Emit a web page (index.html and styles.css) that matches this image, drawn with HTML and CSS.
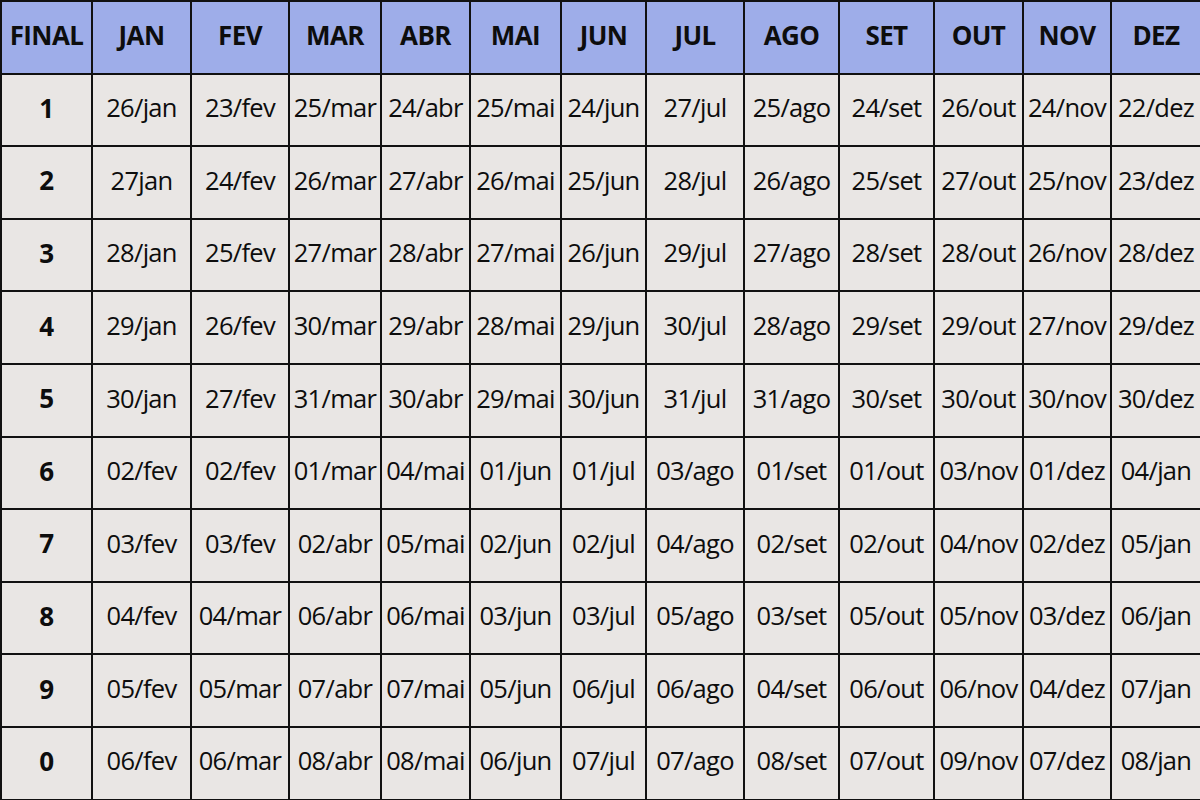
FILE: index.html
```html
<!DOCTYPE html>
<html lang="pt-BR">
<head>
<meta charset="utf-8">
<title>Calendário</title>
<link rel="stylesheet" href="styles.css">
</head>
<body>
<table class="cal">
<colgroup>
<col class="c91"><col class="c99"><col class="c98"><col class="c92"><col class="c89"><col class="c91"><col class="c85"><col class="c98"><col class="c95"><col class="c95"><col class="c89"><col class="c88"><col class="c90">
</colgroup>
<thead>
<tr><th>FINAL</th><th>JAN</th><th>FEV</th><th>MAR</th><th>ABR</th><th>MAI</th><th>JUN</th><th>JUL</th><th>AGO</th><th>SET</th><th>OUT</th><th>NOV</th><th>DEZ</th></tr>
</thead>
<tbody>
<tr><th>1</th><td>26/jan</td><td>23/fev</td><td>25/mar</td><td>24/abr</td><td>25/mai</td><td>24/jun</td><td>27/jul</td><td>25/ago</td><td>24/set</td><td>26/out</td><td>24/nov</td><td>22/dez</td></tr>
<tr><th>2</th><td>27jan</td><td>24/fev</td><td>26/mar</td><td>27/abr</td><td>26/mai</td><td>25/jun</td><td>28/jul</td><td>26/ago</td><td>25/set</td><td>27/out</td><td>25/nov</td><td>23/dez</td></tr>
<tr><th>3</th><td>28/jan</td><td>25/fev</td><td>27/mar</td><td>28/abr</td><td>27/mai</td><td>26/jun</td><td>29/jul</td><td>27/ago</td><td>28/set</td><td>28/out</td><td>26/nov</td><td>28/dez</td></tr>
<tr><th>4</th><td>29/jan</td><td>26/fev</td><td>30/mar</td><td>29/abr</td><td>28/mai</td><td>29/jun</td><td>30/jul</td><td>28/ago</td><td>29/set</td><td>29/out</td><td>27/nov</td><td>29/dez</td></tr>
<tr><th>5</th><td>30/jan</td><td>27/fev</td><td>31/mar</td><td>30/abr</td><td>29/mai</td><td>30/jun</td><td>31/jul</td><td>31/ago</td><td>30/set</td><td>30/out</td><td>30/nov</td><td>30/dez</td></tr>
<tr><th>6</th><td>02/fev</td><td>02/fev</td><td>01/mar</td><td>04/mai</td><td>01/jun</td><td>01/jul</td><td>03/ago</td><td>01/set</td><td>01/out</td><td>03/nov</td><td>01/dez</td><td>04/jan</td></tr>
<tr><th>7</th><td>03/fev</td><td>03/fev</td><td>02/abr</td><td>05/mai</td><td>02/jun</td><td>02/jul</td><td>04/ago</td><td>02/set</td><td>02/out</td><td>04/nov</td><td>02/dez</td><td>05/jan</td></tr>
<tr><th>8</th><td>04/fev</td><td>04/mar</td><td>06/abr</td><td>06/mai</td><td>03/jun</td><td>03/jul</td><td>05/ago</td><td>03/set</td><td>05/out</td><td>05/nov</td><td>03/dez</td><td>06/jan</td></tr>
<tr><th>9</th><td>05/fev</td><td>05/mar</td><td>07/abr</td><td>07/mai</td><td>05/jun</td><td>06/jul</td><td>06/ago</td><td>04/set</td><td>06/out</td><td>06/nov</td><td>04/dez</td><td>07/jan</td></tr>
<tr><th>0</th><td>06/fev</td><td>06/mar</td><td>08/abr</td><td>08/mai</td><td>06/jun</td><td>07/jul</td><td>07/ago</td><td>08/set</td><td>07/out</td><td>09/nov</td><td>07/dez</td><td>08/jan</td></tr>
</tbody>
</table>
</body>
</html>
```
FILE: styles.css
```css
html, body {
  margin: 0;
  padding: 0;
  background: #e9e6e4;
}
.cal {
  width: 1200px;
  table-layout: fixed;
  border-collapse: collapse;
  font-family: "Open Sans", "DejaVu Sans", sans-serif;
  color: #0d0d0d;
  background: #e9e6e4;
}
.cal tr {
  height: 72.6px;
}
.cal th, .cal td {
  border: 2px solid #111;
  padding: 0 0 4px;
  text-align: center;
  vertical-align: middle;
  white-space: nowrap;
  overflow: hidden;
  line-height: 1;
}
.cal td {
  font-size: 25.5px;
  font-weight: 400;
  letter-spacing: -0.7px;
}
.cal th {
  font-size: 26px;
  font-weight: 700;
  letter-spacing: -0.6px;
}
.cal thead th {
  background: #9eade9;
}
.c91 { width: 91px; }
.c99 { width: 99px; }
.c98 { width: 98px; }
.c92 { width: 92px; }
.c89 { width: 89px; }
.c85 { width: 85px; }
.c95 { width: 95px; }
.c88 { width: 88px; }
.c90 { width: 90px; }
```
